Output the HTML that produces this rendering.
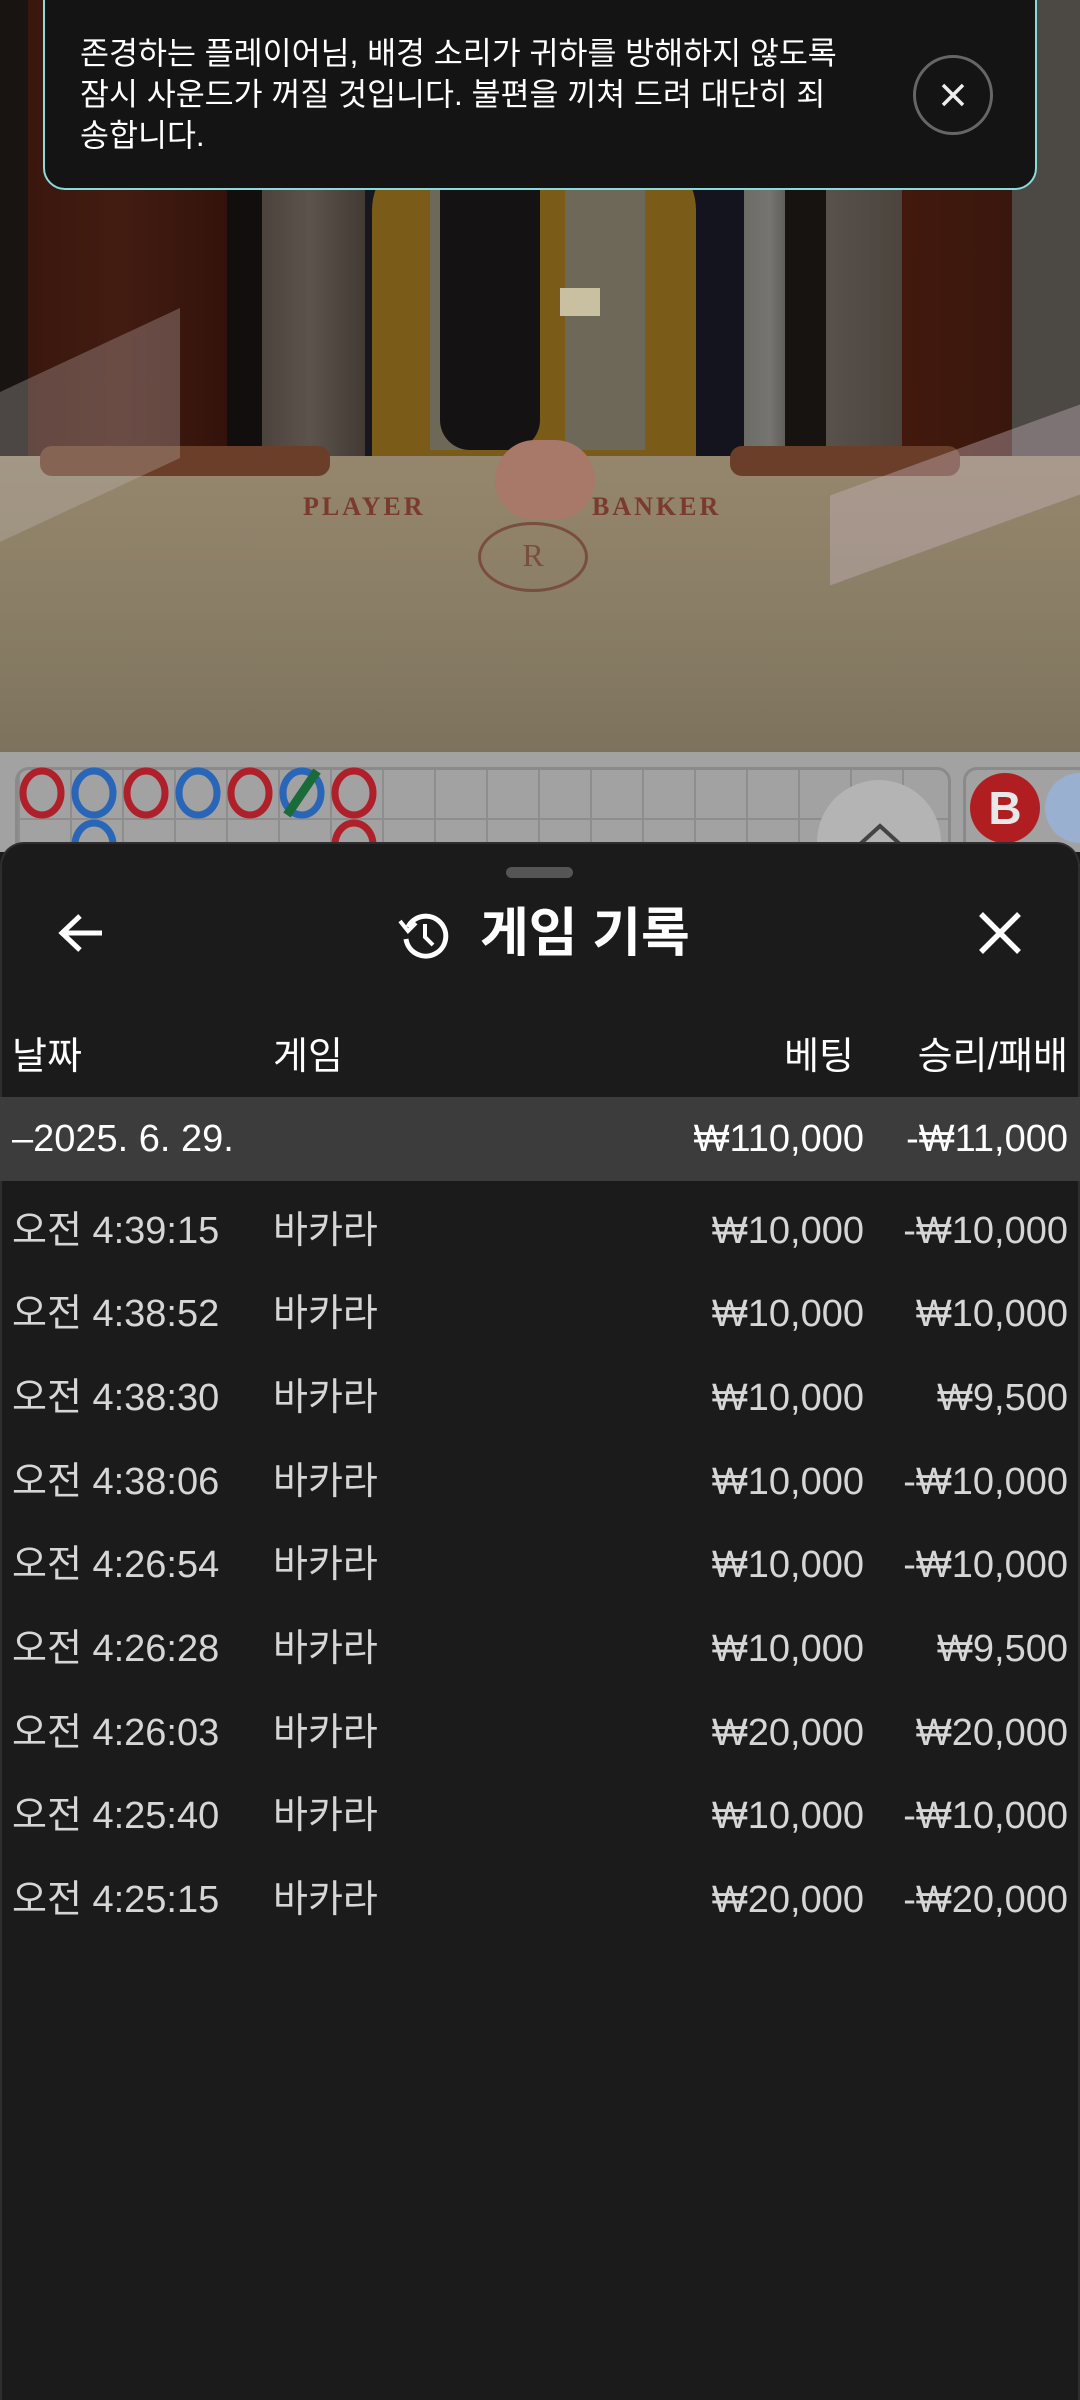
<!DOCTYPE html>
<html><head><meta charset="utf-8"><style>
*{margin:0;padding:0;box-sizing:border-box}
body{width:1080px;height:2400px;overflow:hidden;background:#1b1b1b;font-family:"Liberation Sans","Noto Sans CJK KR",sans-serif;position:relative}
.abs{position:absolute}
.video{left:0;top:0;width:1080px;height:752px;background:#3a2c24;overflow:hidden}
.row{position:absolute;left:0;width:1080px;height:84px;color:#d6d6d6;font-size:38px;line-height:84px}
.row span{position:absolute;top:0;white-space:nowrap}
.c1{left:12px}.c2{left:273px}.c3{right:216px}.c4{right:12px}
</style></head><body>
<div class="abs video">
  <div class="abs" style="left:0;top:0;width:1080px;height:460px;background:linear-gradient(90deg,#2c2620 0,#2c2620 28px,#6a2a18 28px,#7a3420 120px,#5e2214 227px,#1f1a18 227px,#1f1a18 262px,#8a7a70 262px,#a8988a 310px,#7a6a60 365px,#2a2a3a 365px,#252538 744px,#c8c4bc 744px,#d8d4cc 770px,#b0aca4 785px,#2a2420 785px,#2a2420 826px,#a29488 826px,#8a7c70 902px,#7a2e18 902px,#6a2a18 1012px,#8a847c 1012px)"></div>
  <div class="abs" style="left:0;top:0;width:1080px;height:460px;background:rgba(0,0,0,.45)"></div>
  <div class="abs" style="left:372px;top:150px;width:324px;height:330px;background:#7a5c18;border-radius:60px 60px 10px 10px"></div>
  <div class="abs" style="left:430px;top:150px;width:80px;height:300px;background:#6e6858;"></div>
  <div class="abs" style="left:565px;top:150px;width:80px;height:300px;background:#6e6858;"></div>
  <div class="abs" style="left:440px;top:150px;width:100px;height:300px;background:#141212;border-radius:0 0 30px 30px"></div>
  <div class="abs" style="left:560px;top:288px;width:40px;height:28px;background:#c8c0a0"></div>
  <div class="abs" style="left:0;top:456px;width:1080px;height:296px;background:linear-gradient(#95876d,#8a7e66 50%,#7d735d)"></div>
  <div class="abs" style="left:40px;top:446px;width:290px;height:30px;background:#6a3e28;border-radius:12px"></div>
  <div class="abs" style="left:730px;top:446px;width:230px;height:30px;background:#6a3e28;border-radius:12px"></div>
  <div class="abs" style="left:495px;top:440px;width:100px;height:80px;background:#a87868;border-radius:40px"></div>
  <div class="abs" style="left:303px;top:492px;font-family:'Liberation Serif',serif;font-size:26px;font-weight:bold;color:#7a3a2e;letter-spacing:3px">PLAYER</div>
  <div class="abs" style="left:592px;top:492px;font-family:'Liberation Serif',serif;font-size:26px;font-weight:bold;color:#7a3a2e;letter-spacing:3px">BANKER</div>
  <div class="abs" style="left:478px;top:522px;width:110px;height:70px;border:3px solid #7a4e3e;border-radius:50%;color:#7a4e3e;font-family:'Liberation Serif',serif;font-size:32px;text-align:center;line-height:60px">R</div>
  <div class="abs" style="left:0;top:350px;width:180px;height:150px;background:rgba(200,190,190,.3);transform:skewY(-25deg)"></div>
  <div class="abs" style="left:830px;top:450px;width:250px;height:90px;background:rgba(200,180,190,.4);transform:skewY(-20deg)"></div>
</div>
<div class="abs" style="left:43px;top:-20px;width:994px;height:210px;background:#141414;border:2px solid #8adcd8;border-radius:0 0 22px 22px"></div>
<div class="abs" style="left:80px;top:33px;white-space:nowrap;color:#fff;font-size:31.5px;line-height:41px">존경하는 플레이어님, 배경 소리가 귀하를 방해하지 않도록<br>잠시 사운드가 꺼질 것입니다. 불편을 끼쳐 드려 대단히 죄<br>송합니다.</div>
<div class="abs" style="left:913px;top:55px;width:80px;height:80px;border:3px solid #666;border-radius:50%"></div>
<svg class="abs" style="left:937px;top:79px" width="32" height="32" viewBox="0 0 32 32"><path d="M6 6L26 26M26 6L6 26" stroke="#eee" stroke-width="3.5"/></svg>
<div class="abs" style="left:0;top:752px;width:1080px;height:100px;background:#a2a2a2"></div>
<div class="abs" style="left:15px;top:767px;width:936px;height:100px;border:3px solid #8a8a8a;border-radius:14px;background-image:linear-gradient(90deg,#8e8e8e 2px,transparent 2px),linear-gradient(#8e8e8e 2px,transparent 2px);background-size:52px 50px;background-position:0 0,0 -2px"></div>
<div class="abs" style="left:963px;top:767px;width:130px;height:100px;border:3px solid #8a8a8a;border-radius:14px"></div>
<div class="abs" style="left:970px;top:773px;width:70px;height:70px;border-radius:50%;background:#b01e22;color:#e8e8e8;font-size:46px;font-weight:bold;text-align:center;line-height:70px">B</div>
<div class="abs" style="left:1045px;top:773px;width:70px;height:70px;border-radius:50%;background:#9ab0d0"></div>
<div class="abs" style="left:817px;top:780px;width:124px;height:124px;border-radius:50%;background:#b4b4b4"></div>
<svg class="abs" style="left:850px;top:820px" width="60" height="30"><path d="M8 26L30 6L52 26" fill="none" stroke="#444" stroke-width="4"/></svg>
<svg class="abs" style="left:15px;top:767px" width="400" height="100">
<g fill="none" stroke-width="7">
<ellipse cx="27" cy="26" rx="19" ry="22" stroke="#b0202a"/>
<ellipse cx="79" cy="26" rx="19" ry="22" stroke="#2a66b8"/>
<ellipse cx="131" cy="26" rx="19" ry="22" stroke="#b0202a"/>
<ellipse cx="183" cy="26" rx="19" ry="22" stroke="#2a66b8"/>
<ellipse cx="235" cy="26" rx="19" ry="22" stroke="#b0202a"/>
<ellipse cx="287" cy="26" rx="19" ry="22" stroke="#2a66b8"/>
<ellipse cx="339" cy="26" rx="19" ry="22" stroke="#b0202a"/>
<ellipse cx="79" cy="78" rx="19" ry="22" stroke="#2a66b8"/>
<ellipse cx="339" cy="78" rx="19" ry="22" stroke="#b0202a"/>
<path d="M272 48L302 4" stroke="#1a6a3a" stroke-width="9"/>
</g></svg>
<div class="abs" style="left:0;top:842px;width:1080px;height:1558px;background:#1b1b1b;border-radius:24px 24px 0 0;border:2px solid #2e2e2e;border-bottom:none"></div>
<div class="abs" style="left:506px;top:867px;width:67px;height:11px;background:#555;border-radius:6px"></div>
<svg class="abs" style="left:56px;top:910px" width="50" height="46" viewBox="0 0 50 46"><path d="M46 23H8M24 6L6 23L24 40" fill="none" stroke="#fff" stroke-width="5"/></svg>
<svg class="abs" style="left:396px;top:907px" width="56" height="56" viewBox="0 0 56 56"><path d="M12 20A20 20 0 1 1 10 32" fill="none" stroke="#fff" stroke-width="5"/><path d="M4 14L12 24L20 16" fill="none" stroke="#fff" stroke-width="4"/><path d="M29 17V30L37 38" fill="none" stroke="#fff" stroke-width="4"/></svg>
<div class="abs" style="left:480px;top:902px;color:#fff;font-size:53px;font-weight:bold;line-height:64px">게임 기록</div>
<svg class="abs" style="left:977px;top:910px" width="46" height="46" viewBox="0 0 46 46"><path d="M4 4L42 42M42 4L4 42" stroke="#fff" stroke-width="5.5"/></svg>
<div class="row" style="top:1015px;color:#fff"><span class="c1">날짜</span><span class="c2">게임</span><span style="right:226px">베팅</span><span class="c4">승리/패배</span></div>
<div class="row" style="top:1097px;background:#3c3c3c;color:#fff"><span class="c1">–2025. 6. 29.</span><span class="c3">₩110,000</span><span class="c4">-₩11,000</span></div>
<div class="row" style="top:1189px"><span class="c1">오전 4:39:15</span><span class="c2">바카라</span><span class="c3">₩10,000</span><span class="c4">-₩10,000</span></div>
<div class="row" style="top:1272px"><span class="c1">오전 4:38:52</span><span class="c2">바카라</span><span class="c3">₩10,000</span><span class="c4">₩10,000</span></div>
<div class="row" style="top:1356px"><span class="c1">오전 4:38:30</span><span class="c2">바카라</span><span class="c3">₩10,000</span><span class="c4">₩9,500</span></div>
<div class="row" style="top:1440px"><span class="c1">오전 4:38:06</span><span class="c2">바카라</span><span class="c3">₩10,000</span><span class="c4">-₩10,000</span></div>
<div class="row" style="top:1523px"><span class="c1">오전 4:26:54</span><span class="c2">바카라</span><span class="c3">₩10,000</span><span class="c4">-₩10,000</span></div>
<div class="row" style="top:1607px"><span class="c1">오전 4:26:28</span><span class="c2">바카라</span><span class="c3">₩10,000</span><span class="c4">₩9,500</span></div>
<div class="row" style="top:1691px"><span class="c1">오전 4:26:03</span><span class="c2">바카라</span><span class="c3">₩20,000</span><span class="c4">₩20,000</span></div>
<div class="row" style="top:1774px"><span class="c1">오전 4:25:40</span><span class="c2">바카라</span><span class="c3">₩10,000</span><span class="c4">-₩10,000</span></div>
<div class="row" style="top:1858px"><span class="c1">오전 4:25:15</span><span class="c2">바카라</span><span class="c3">₩20,000</span><span class="c4">-₩20,000</span></div>
</body></html>
